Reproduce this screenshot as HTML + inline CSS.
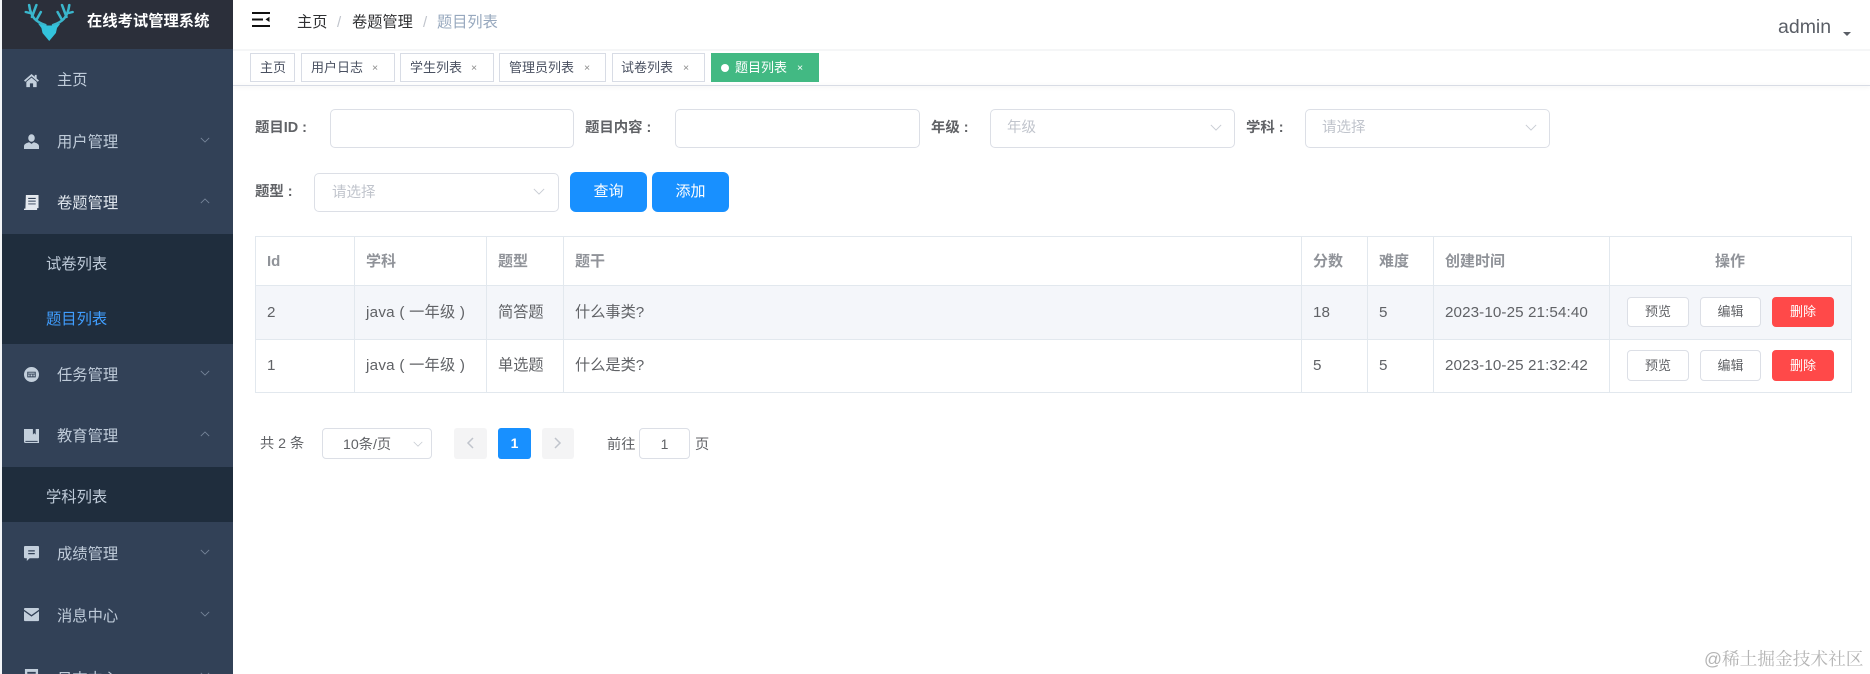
<!DOCTYPE html>
<html lang="zh-CN">
<head>
<meta charset="utf-8">
<title>题目列表</title>
<style>
html,body{margin:0;padding:0;width:1870px;height:674px;overflow:hidden;background:#fff}
body{position:relative;font-family:"Liberation Sans","Noto Sans CJK SC",sans-serif;color:#606266}
.a{position:absolute;box-sizing:border-box}
.t{position:absolute;white-space:nowrap;line-height:20px}
.m{font-size:15.3px;color:#bfcbd9;left:57px}
.s{font-size:15.3px;color:#bfcbd9;left:46px}
.i{position:absolute;left:24px;width:15px;height:15px;fill:#c3cfdc}
.c{position:absolute;left:200px;width:10px;height:6px;fill:none;stroke:#77869a;stroke-width:1}
.tag{position:absolute;top:53px;height:29px;box-sizing:border-box;border:1px solid #d8dce5;background:#fff;font-size:13px;line-height:27px;color:#495060;white-space:nowrap}
.tag i{position:absolute;top:1px;font-style:normal;font-size:10.5px;color:#888}
.lab{font-size:14.4px;font-weight:700;color:#606266}
.inp{position:absolute;box-sizing:border-box;border:1px solid #dcdfe6;border-radius:5px;background:#fff}
.ph{font-size:14.5px;color:#c0c4cc}
.ch{position:absolute;width:12px;height:7px;fill:none;stroke:#c8ccd3;stroke-width:1.1}
.btn{position:absolute;box-sizing:border-box;background:#1890ff;color:#fff;border-radius:6px;text-align:center;font-size:15px;line-height:40px;top:172px;height:40px}
.h{position:absolute;background:#e2e8ee}
.th{font-size:15px;font-weight:700;color:#909399}
.td{font-size:15.2px;color:#606266}
.mb{position:absolute;box-sizing:border-box;border:1px solid #dcdfe6;border-radius:4px;background:#fff;text-align:center;font-size:13px;color:#606266}
.mb.r{background:#ff4949;border-color:#ff4949;color:#fff}
.pg{position:absolute;border-radius:3px;background:#f4f4f5;top:428px;height:31px}
.pt{font-size:14.2px;color:#606266}
</style>
</head>
<body>
<!-- sidebar -->
<div class="a" style="left:0;top:0;width:2px;height:674px;background:#f3f5f8"></div>
<div class="a" style="left:2px;top:0;width:231px;height:674px;background:#324157"></div>
<div class="a" style="left:2px;top:0;width:231px;height:49px;background:#2b2f3a"></div>
<svg class="a" style="left:23px;top:0" width="58" height="44" viewBox="0 0 52 44" preserveAspectRatio="none">
  <g fill="none" stroke="#3ab6cc" stroke-width="2.300" stroke-linecap="round" stroke-linejoin="round">
    <path d="M20 25 C12 22 7 18 5.500 5"/><path d="M6 13 L2.500 12"/><path d="M8 17 L12 5"/><path d="M12 20 L16 12"/>
    <path d="M27 25 C35 22 40 18 41.500 5"/><path d="M41 13 L44.500 12"/><path d="M39 17 L35 5"/><path d="M35 20 L31 12"/>
  </g>
  <path d="M13.500 23.500 L19.500 25.500 H27.500 L33.500 23.500 L30.500 28 L29.500 33 L23.500 41 L17.500 33 L16.500 28 Z" fill="#33c3dc"/>
</svg>
<div class="t" style="left:87px;top:12px;font-size:15.300px;font-weight:700;color:#fff">在线考试管理系统</div>

<svg class="i" style="top:73px" viewBox="0 0 16 16"><path d="M8 1 L0 8 L1.300 9.300 L8 3.600 L14.700 9.300 L16 8 L13.500 5.800 V2 H11.500 V4 Z"/><path d="M2.500 9.500 L8 4.900 L13.500 9.500 V15 H9.700 V11 H6.300 V15 H2.500 Z"/></svg>
<div class="t m" style="top:71px">主页</div>

<svg class="i" style="top:134px" viewBox="0 0 16 16"><ellipse cx="8" cy="4.300" rx="3.500" ry="4"/><path d="M0 16 V13 C0 10.500 3 9.500 5.500 8.800 L8 10.500 L10.500 8.800 C13 9.500 16 10.500 16 13 V16 Z"/></svg>
<div class="t m" style="top:133px">用户管理</div>
<svg class="c" style="top:137px" viewBox="0 0 12 7"><path d="M1 1 L6 6 L11 1"/></svg>

<svg class="i" style="top:195px;fill:#e4e8ee" viewBox="0 0 16 16"><path fill-rule="evenodd" d="M2 0 H15.500 V14 H14 V16 H0 V14.500 H1.500 Z M4.500 3 V4.200 H12.500 V3 Z M4.500 6 V7 H12.500 V6 Z M4.500 9 V10 H12.500 V9 Z"/></svg>
<div class="t m" style="top:194px;color:#e1e7ee">卷题管理</div>
<svg class="c" style="top:198px" viewBox="0 0 12 7"><path d="M1 6 L6 1 L11 6"/></svg>

<div class="a" style="left:2px;top:234px;width:231px;height:110px;background:#1f2d3d"></div>
<div class="t s" style="top:255px">试卷列表</div>
<div class="t s" style="top:310px;color:#409eff">题目列表</div>

<svg class="i" style="top:367px" viewBox="0 0 16 16"><path fill-rule="evenodd" d="M8 0 A8 8 0 1 1 8 16 A8 8 0 1 1 8 0 Z M3.500 5 V11 H12.500 V5 Z"/><path d="M4.500 6 H11.500 V7 H4.500 Z M4.500 8 H6 V10 H4.500 Z M7 8 H9 V10 H7 Z M10 8 H11.500 V10 H10 Z"/></svg>
<div class="t m" style="top:366px">任务管理</div>
<svg class="c" style="top:370px" viewBox="0 0 12 7"><path d="M1 1 L6 6 L11 1"/></svg>

<svg class="i" style="top:428px" viewBox="0 0 16 16"><path fill-rule="evenodd" d="M0 1 H16 V16 H1.500 C0.500 16 0 15.300 0 14.500 Z M1.500 13.700 V14.800 H14.500 V13.700 Z"/><path d="M9.500 1 H12.500 V7 L11 5.500 L9.500 7 Z" fill="#324157"/></svg>
<div class="t m" style="top:427px">教育管理</div>
<svg class="c" style="top:431px" viewBox="0 0 12 7"><path d="M1 6 L6 1 L11 6"/></svg>

<div class="a" style="left:2px;top:467px;width:231px;height:55px;background:#1f2d3d"></div>
<div class="t s" style="top:488px">学科列表</div>

<svg class="i" style="top:546px" viewBox="0 0 16 16"><path fill-rule="evenodd" d="M1 0 H15 Q16 0 16 1 V12 Q16 13 15 13 H6 L3 16 V13 H1 Q0 13 0 12 V1 Q0 0 1 0 Z M4.500 4.500 V5.800 H11.500 V4.500 Z M4.500 7.500 V8.800 H11.500 V7.500 Z"/></svg>
<div class="t m" style="top:545px">成绩管理</div>
<svg class="c" style="top:549px" viewBox="0 0 12 7"><path d="M1 1 L6 6 L11 1"/></svg>

<svg class="i" style="top:607px" viewBox="0 0 16 14"><path d="M0 1 Q0 0 1 0 H15 Q16 0 16 1 V1.800 L8 7.500 L0 1.800 Z"/><path d="M0 3.500 L8 9.200 L16 3.500 V13 Q16 14 15 14 H1 Q0 14 0 13 Z"/></svg>
<div class="t m" style="top:607px">消息中心</div>
<svg class="c" style="top:611px" viewBox="0 0 12 7"><path d="M1 1 L6 6 L11 1"/></svg>

<svg class="i" style="top:669px" viewBox="0 0 16 16"><path fill-rule="evenodd" d="M1 0 H15 V16 H1 Z M3.500 3 V5 H12.500 V3 Z"/></svg>
<div class="t m" style="top:670px">日志中心</div>
<svg class="c" style="top:672px" viewBox="0 0 12 7"><path d="M1 1 L6 6 L11 1"/></svg>

<!-- header -->
<svg class="a" style="left:252px;top:12px" width="18" height="15" viewBox="0 0 18 15"><path d="M0 0 H18 V2 H0 Z M0 6.500 H11 V8.500 H0 Z M0 13 H18 V15 H0 Z M17.500 4.800 V10 L13.500 7.400 Z" fill="#111"/></svg>
<div class="t" style="left:297px;top:13px;font-size:15.200px;color:#303133">主页</div>
<div class="t" style="left:337px;top:13px;font-size:15px;color:#c0c4cc">/</div>
<div class="t" style="left:352px;top:13px;font-size:15.200px;color:#303133">卷题管理</div>
<div class="t" style="left:423px;top:13px;font-size:15px;color:#c0c4cc">/</div>
<div class="t" style="left:437px;top:13px;font-size:15.200px;color:#97a8be">题目列表</div>
<div class="t" style="left:1778px;top:17px;font-size:19.500px;color:#5a5e66">admin</div>
<div class="a" style="left:1843px;top:32px;width:0;height:0;border-left:4px solid transparent;border-right:4px solid transparent;border-top:4px solid #5a5e66"></div>
<div class="a" style="left:233px;top:49px;width:1637px;height:2px;background:#f5f6f7"></div>
<div class="a" style="left:233px;top:85px;width:1637px;height:1px;background:#d8dce5;box-shadow:0 1px 4px rgba(0,21,41,.12)"></div>

<!-- tags -->
<div class="tag" style="left:250px;width:45px;padding-left:9px">主页</div>
<div class="tag" style="left:301px;width:94px;padding-left:9px">用户日志<i style="left:70px">×</i></div>
<div class="tag" style="left:400px;width:94px;padding-left:9px">学生列表<i style="left:70px">×</i></div>
<div class="tag" style="left:499px;width:107px;padding-left:9px">管理员列表<i style="left:84px">×</i></div>
<div class="tag" style="left:612px;width:93px;padding-left:8px">试卷列表<i style="left:70px">×</i></div>
<div class="tag" style="left:711px;width:108px;padding-left:23px;background:#42b983;border-color:#42b983;color:#fff">题目列表<i style="left:85px;color:#fff">×</i><span class="a" style="left:9px;top:10px;width:8px;height:8px;border-radius:50%;background:#fff"></span></div>

<!-- form row 1 -->
<div class="t lab" style="left:255px;top:118px">题目ID :</div>
<div class="inp" style="left:330px;top:109px;width:244px;height:39px"></div>
<div class="t lab" style="left:585px;top:118px">题目内容 :</div>
<div class="inp" style="left:675px;top:109px;width:245px;height:39px"></div>
<div class="t lab" style="left:931px;top:118px">年级 :</div>
<div class="inp" style="left:990px;top:109px;width:245px;height:39px"></div>
<div class="t ph" style="left:1007px;top:118px">年级</div>
<svg class="ch" style="left:1210px;top:124px" viewBox="0 0 14 8"><path d="M1 1 L7 7 L13 1"/></svg>
<div class="t lab" style="left:1246px;top:118px">学科 :</div>
<div class="inp" style="left:1305px;top:109px;width:245px;height:39px"></div>
<div class="t ph" style="left:1322px;top:118px">请选择</div>
<svg class="ch" style="left:1525px;top:124px" viewBox="0 0 14 8"><path d="M1 1 L7 7 L13 1"/></svg>

<!-- form row 2 -->
<div class="t lab" style="left:255px;top:182px">题型 :</div>
<div class="inp" style="left:314px;top:173px;width:245px;height:39px"></div>
<div class="t ph" style="left:332px;top:183px">请选择</div>
<svg class="ch" style="left:533px;top:188px" viewBox="0 0 14 8"><path d="M1 1 L7 7 L13 1"/></svg>
<div class="btn" style="left:570px;width:77px">查询</div>
<div class="btn" style="left:652px;width:77px">添加</div>

<!-- table -->
<div class="a" style="left:255px;top:285px;width:1597px;height:54px;background:#f4f6fa"></div>
<div class="h" style="left:255px;top:236px;width:1597px;height:1px"></div>
<div class="h" style="left:255px;top:285px;width:1597px;height:1px"></div>
<div class="h" style="left:255px;top:339px;width:1597px;height:1px"></div>
<div class="h" style="left:255px;top:392px;width:1597px;height:1px"></div>
<div class="h" style="left:255px;top:236px;width:1px;height:157px"></div>
<div class="h" style="left:354px;top:236px;width:1px;height:157px"></div>
<div class="h" style="left:486px;top:236px;width:1px;height:157px"></div>
<div class="h" style="left:563px;top:236px;width:1px;height:157px"></div>
<div class="h" style="left:1301px;top:236px;width:1px;height:157px"></div>
<div class="h" style="left:1367px;top:236px;width:1px;height:157px"></div>
<div class="h" style="left:1433px;top:236px;width:1px;height:157px"></div>
<div class="h" style="left:1609px;top:236px;width:1px;height:157px"></div>
<div class="h" style="left:1851px;top:236px;width:1px;height:157px"></div>

<div class="t th" style="left:267px;top:252px">Id</div>
<div class="t th" style="left:366px;top:252px">学科</div>
<div class="t th" style="left:498px;top:252px">题型</div>
<div class="t th" style="left:575px;top:252px">题干</div>
<div class="t th" style="left:1313px;top:252px">分数</div>
<div class="t th" style="left:1379px;top:252px">难度</div>
<div class="t th" style="left:1445px;top:252px">创建时间</div>
<div class="t th" style="left:1715px;top:252px">操作</div>

<div class="t td" style="left:267px;top:303px">2</div>
<div class="t td" style="left:366px;top:303px;letter-spacing:.25px">java ( 一年级 )</div>
<div class="t td" style="left:498px;top:303px">简答题</div>
<div class="t td" style="left:575px;top:303px">什么事类?</div>
<div class="t td" style="left:1313px;top:303px">18</div>
<div class="t td" style="left:1379px;top:303px">5</div>
<div class="t td" style="left:1445px;top:303px;letter-spacing:.1px">2023-10-25 21:54:40</div>
<div class="mb" style="left:1627px;top:297px;width:62px;height:30px;line-height:28px">预览</div>
<div class="mb" style="left:1700px;top:297px;width:61px;height:30px;line-height:28px">编辑</div>
<div class="mb r" style="left:1772px;top:297px;width:62px;height:30px;line-height:28px">删除</div>

<div class="t td" style="left:267px;top:356px">1</div>
<div class="t td" style="left:366px;top:356px;letter-spacing:.25px">java ( 一年级 )</div>
<div class="t td" style="left:498px;top:356px">单选题</div>
<div class="t td" style="left:575px;top:356px">什么是类?</div>
<div class="t td" style="left:1313px;top:356px">5</div>
<div class="t td" style="left:1379px;top:356px">5</div>
<div class="t td" style="left:1445px;top:356px;letter-spacing:.1px">2023-10-25 21:32:42</div>
<div class="mb" style="left:1627px;top:350px;width:62px;height:31px;line-height:29px">预览</div>
<div class="mb" style="left:1700px;top:350px;width:61px;height:31px;line-height:29px">编辑</div>
<div class="mb r" style="left:1772px;top:350px;width:62px;height:31px;line-height:29px">删除</div>

<!-- pagination -->
<div class="t pt" style="left:260px;top:434px">共 2 条</div>
<div class="inp" style="left:322px;top:428px;width:110px;height:31px;border-radius:4px"></div>
<div class="t pt" style="left:343px;top:435px">10条/页</div>
<svg class="ch" style="left:413px;top:441px;width:10px;height:6px" viewBox="0 0 14 8"><path d="M1 1 L7 7 L13 1"/></svg>
<div class="pg" style="left:454px;width:33px"></div>
<svg class="a" style="left:466px;top:437px" width="8" height="12" viewBox="0 0 8 12"><path d="M7 1 L2 6 L7 11" fill="none" stroke="#c0c4cc" stroke-width="1.500"/></svg>
<div class="pg" style="left:498px;width:33px;background:#1890ff;color:#fff;font-size:14px;font-weight:700;text-align:center;line-height:31px">1</div>
<div class="pg" style="left:542px;width:32px"></div>
<svg class="a" style="left:554px;top:437px" width="8" height="12" viewBox="0 0 8 12"><path d="M1 1 L6 6 L1 11" fill="none" stroke="#c0c4cc" stroke-width="1.500"/></svg>
<div class="t pt" style="left:607px;top:435px">前往</div>
<div class="inp" style="left:639px;top:428px;width:51px;height:31px;border-radius:4px;text-align:center;font-size:14px;line-height:30px">1</div>
<div class="t pt" style="left:695px;top:435px">页</div>

<!-- watermark -->
<div class="t" style="left:1704px;top:649px;font-size:17.700px;color:#b4b4b4;font-family:'Liberation Sans','Noto Serif CJK SC',serif">@稀土掘金技术社区</div>
</body>
</html>
